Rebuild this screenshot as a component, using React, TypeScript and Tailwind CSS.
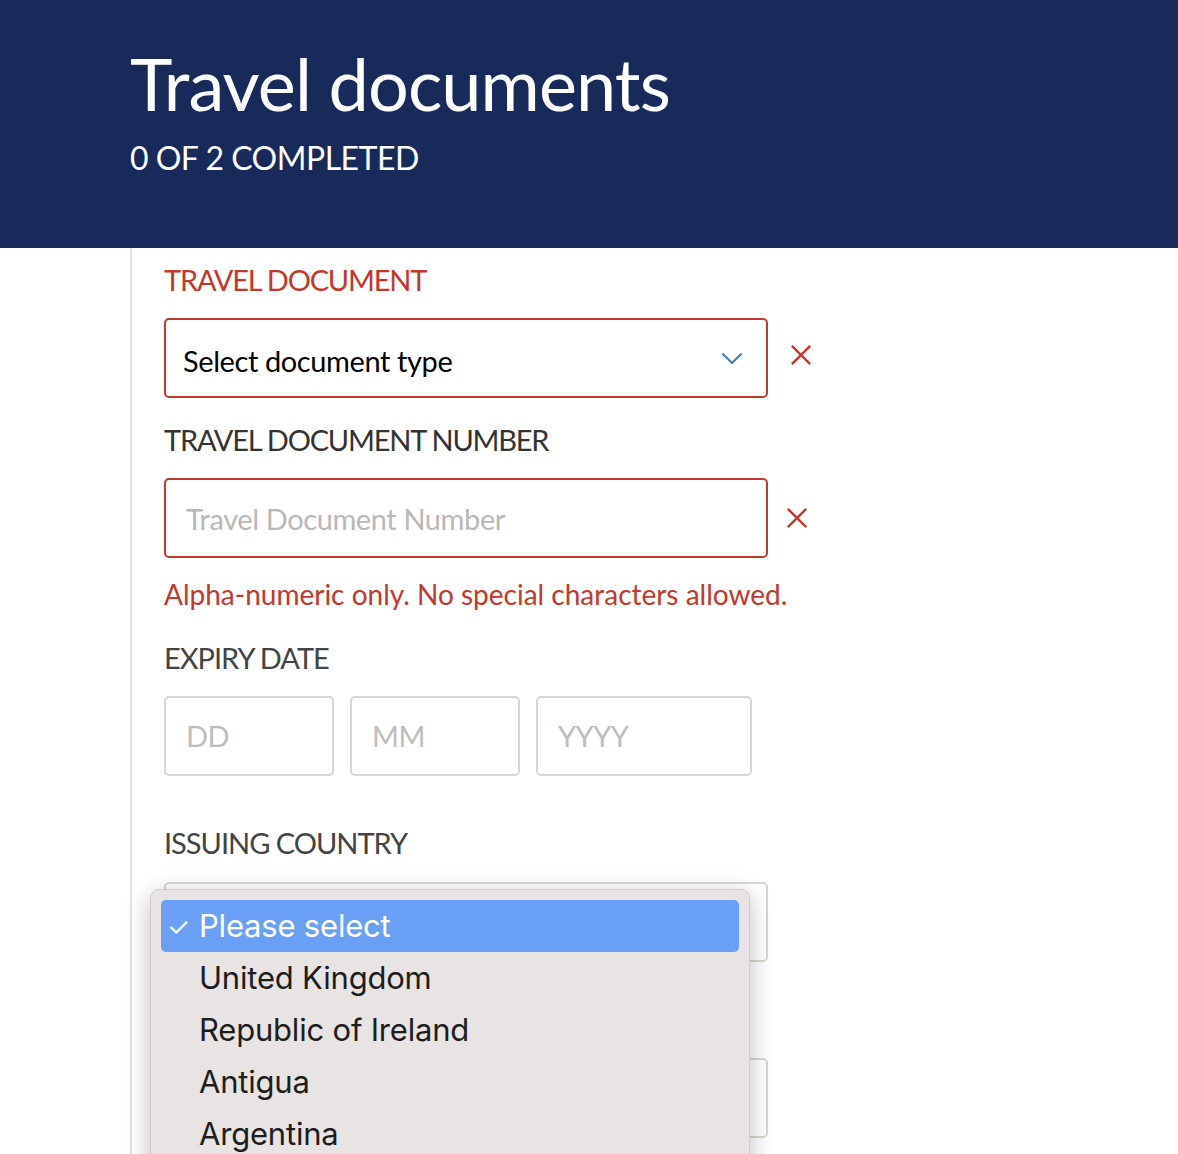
import React from "react";

const brand = { fontFamily: '"Lato", "Liberation Sans", sans-serif' };
const sys = { fontFamily: '"Inter", "Roboto", sans-serif' };

const CloseIcon: React.FC<{ className?: string }> = ({ className }) => (
  <svg viewBox="0 0 24 24" className={className} fill="none" stroke="currentColor" strokeWidth={2.6} strokeLinecap="butt">
    <path d="M2 2 L22 22 M22 2 L2 22" />
  </svg>
);

const Chevron: React.FC = () => (
  <svg viewBox="0 0 24 14" className="w-[22px] h-[13px] text-[#3f7fa8]" fill="none" stroke="currentColor" strokeWidth={2.2}>
    <path d="M1.5 1.5 L12 12 L22.5 1.5" />
  </svg>
);

const countries = ["Please select", "United Kingdom", "Republic of Ireland", "Antigua", "Argentina"];

export default function App() {
  return (
    <div className="relative min-h-[1154px] bg-white overflow-hidden" style={brand}>
      {/* Header */}
      <header className="h-[248px] bg-[#172a5a] pl-[130px] pt-[40px] text-white">
        <h1 className="text-[72px] leading-[86px] tracking-[-0.9px]">Travel documents</h1>
        <p className="mt-[12px] text-[32px] leading-[40px] tracking-[-0.5px]">0 OF 2 COMPLETED</p>
      </header>

      {/* Form */}
      <div className="ml-[130px] border-l-2 border-[#e2e2e2] pl-[32px] pt-[14px] pb-[40px] min-h-[906px]">
        <label className="block text-[29px] leading-[36px] tracking-[-1.2px] text-[#c4372c]">TRAVEL DOCUMENT</label>
        <div className="mt-[20px] flex items-center">
          <div className="w-[604px] h-[80px] rounded-[5px] border-2 border-[#c4372c] flex items-center justify-between pl-[17px] pr-[23px]">
            <span className="mt-[6px] text-[29px] text-black tracking-[-0.4px]">Select document type</span>
            <Chevron />
          </div>
          <CloseIcon className="ml-[22px] w-[22px] h-[22px] text-[#c4372c] -mt-[6px]" />
        </div>

        <label className="mt-[24px] block text-[29px] leading-[36px] tracking-[-1.2px] text-[#333]">TRAVEL DOCUMENT NUMBER</label>
        <div className="mt-[20px] flex items-center">
          <div className="w-[604px] h-[80px] rounded-[5px] border-2 border-[#c4372c] flex items-center pl-[20px]">
            <span className="mt-[2px] text-[29px] text-[#b8b8b8] tracking-[-0.4px]">Travel Document Number</span>
          </div>
          <CloseIcon className="ml-[18px] w-[22px] h-[22px] text-[#c4372c]" />
        </div>
        <p className="mt-[18px] text-[28px] leading-[36px] tracking-[0px] text-[#c4372c]">
          Alpha-numeric only. No special characters allowed.
        </p>

        <label className="mt-[28px] block text-[29px] leading-[36px] tracking-[-1px] text-[#444]">EXPIRY DATE</label>
        <div className="mt-[20px] flex gap-[16px]">
          {[
            { t: "DD", w: "w-[170px]" },
            { t: "MM", w: "w-[170px]" },
            { t: "YYYY", w: "w-[216px]" },
          ].map((d) => (
            <div key={d.t} className={`${d.w} h-[80px] rounded-[5px] border-2 border-[#d9d6cf] flex items-center pl-[20px]`}>
              <span className="text-[29px] text-[#bdbdbd] tracking-[-0.5px]">{d.t}</span>
            </div>
          ))}
        </div>

        <label className="mt-[49px] block text-[29px] leading-[36px] tracking-[-1px] text-[#444]">ISSUING COUNTRY</label>
        <div className="mt-[21px] w-[604px] h-[80px] rounded-[5px] border-2 border-[#d9d6cf]" />
        <div className="mt-[96px] w-[604px] h-[80px] rounded-[5px] border-2 border-[#d9d6cf]" />
      </div>

      {/* Native select popup */}
      <div
        className="absolute left-[150px] top-[889px] w-[600px] h-[300px] rounded-[9px] bg-[#e9e4e4] border border-[#d0cccc] shadow-[0_6px_24px_rgba(0,0,0,0.25)] px-[10px] pt-[10px]"
        style={sys}
      >
        {countries.map((c, i) => (
          <div
            key={c}
            className={`h-[52px] rounded-[5px] flex items-center ${i === 0 ? "bg-[#69a0f6] text-white" : "text-[#1d1d1d]"}`}
          >
            <span className="w-[38px] pl-[6px] text-[26px]">{i === 0 ? "✓" : ""}</span>
            <span className="text-[31px] tracking-[-0.2px]">{c}</span>
          </div>
        ))}
      </div>
    </div>
  );
}
